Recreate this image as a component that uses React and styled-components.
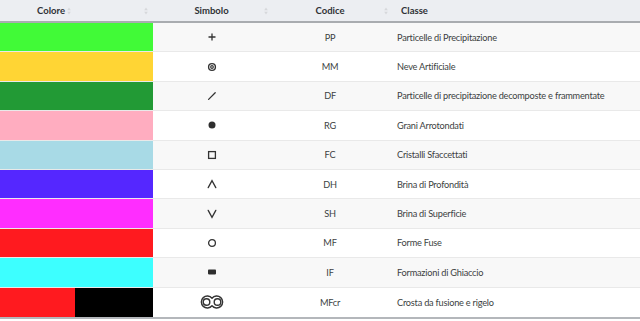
import React from "react";
import styled, { createGlobalStyle } from "styled-components";

const Global = createGlobalStyle`
  html, body { margin: 0; padding: 0; background: #ffffff; }
  body { font-family: Lato, "Liberation Sans", sans-serif; }
`;

const COLS = "75px 78px 117px 120px 1fr";

const Table = styled.div`
  width: 640px;
  display: flex;
  flex-direction: column;
  border-bottom: 2px solid #b4b7bb;
`;

const HeaderRow = styled.div`
  display: grid;
  grid-template-columns: ${COLS};
  height: 23px;
  box-sizing: border-box;
  background: #eceef2;
  border-bottom: 2px solid #a9acb0;
`;

const HeaderCell = styled.div`
  position: relative;
  display: flex;
  align-items: center;
  justify-content: ${(p) => (p.$left ? "flex-start" : "center")};
  padding-left: ${(p) => p.$pl || 0}px;
  font-size: 9.5px;
  font-weight: 700;
  color: #2f3236;
`;

const SortIcon = styled.svg`
  position: absolute;
  right: ${(p) => p.$right ?? 3}px;
  top: 50%;
  margin-top: -4px;
  width: 4px;
  height: 8px;
`;

const Row = styled.div`
  display: grid;
  grid-template-columns: ${COLS};
  height: 29.4px;
  box-sizing: border-box;
  border-bottom: ${(p) => (p.$last ? "none" : "1px solid #e9e9e9")};
  background: ${(p) => (p.$striped ? "#f8f8f8" : "#ffffff")};
`;

const Swatch = styled.div`
  grid-column: ${(p) => (p.$span ? "span 2" : "auto")};
  background: ${(p) => p.$color};
`;

const Cell = styled.div`
  display: flex;
  align-items: center;
  justify-content: ${(p) => (p.$left ? "flex-start" : "center")};
  padding-left: ${(p) => p.$pl || 0}px;
  font-size: 9.2px;
  letter-spacing: -0.22px;
  color: #3c3f42;
  white-space: nowrap;
`;

const Sort = ({ right }) => (
  <SortIcon $right={right} viewBox="0 0 4 8">
    <path d="M2 0.5 L3.8 3.2 L0.2 3.2 Z" fill="#d6d8db" />
    <path d="M2 7.5 L3.8 4.8 L0.2 4.8 Z" fill="#d6d8db" />
  </SortIcon>
);

const S = { stroke: "#333", strokeWidth: 1.3, fill: "none", strokeLinecap: "round", strokeLinejoin: "round" };

const symbols = {
  PP: (
    <svg width="10" height="10" viewBox="0 0 10 10">
      <path d="M5 1.5 V8.5 M1.5 5 H8.5" {...S} strokeLinecap="butt" />
    </svg>
  ),
  MM: (
    <svg width="10" height="10" viewBox="0 0 10 10">
      <circle cx="5" cy="5" r="3.4" {...S} strokeWidth="1.4" />
      <circle cx="5" cy="5" r="1.3" {...S} strokeWidth="1.2" />
    </svg>
  ),
  DF: (
    <svg width="10" height="10" viewBox="0 0 10 10">
      <path d="M1.6 8.4 L8.2 1.8" {...S} />
    </svg>
  ),
  RG: (
    <svg width="10" height="10" viewBox="0 0 10 10">
      <circle cx="5" cy="5" r="3.5" fill="#2e2e2e" />
    </svg>
  ),
  FC: (
    <svg width="10" height="10" viewBox="0 0 10 10">
      <rect x="1.6" y="1.6" width="6.8" height="6.8" {...S} strokeLinejoin="miter" />
    </svg>
  ),
  DH: (
    <svg width="10" height="10" viewBox="0 0 10 10">
      <path d="M1.2 8.6 L5 1.6 L8.8 8.6" {...S} strokeLinejoin="miter" />
    </svg>
  ),
  SH: (
    <svg width="10" height="10" viewBox="0 0 10 10">
      <path d="M1.2 1.4 L5 8.4 L8.8 1.4" {...S} strokeLinejoin="miter" />
    </svg>
  ),
  MF: (
    <svg width="10" height="10" viewBox="0 0 10 10">
      <circle cx="5" cy="5" r="3.4" {...S} />
    </svg>
  ),
  IF: (
    <svg width="10" height="10" viewBox="0 0 10 10">
      <rect x="1" y="2.6" width="8" height="4.8" rx="0.8" fill="#2e2e2e" />
    </svg>
  ),
  MFcr: (
    <svg width="26" height="14" viewBox="0 0 26 14">
      <path
        d="M13 3.2 A6 6 0 1 0 13 10.8 A6 6 0 1 0 13 3.2 Z"
        {...S}
        strokeWidth="1.4"
      />
      <circle cx="7.5" cy="7" r="3.3" {...S} strokeWidth="1.4" />
      <circle cx="18.5" cy="7" r="3.3" {...S} strokeWidth="1.4" />
    </svg>
  ),
};

const rows = [
  { code: "PP", colors: ["#41fa37"], name: "Particelle di Precipitazione" },
  { code: "MM", colors: ["#ffd534"], name: "Neve Artificiale" },
  { code: "DF", colors: ["#229a35"], name: "Particelle di precipitazione decomposte e frammentate" },
  { code: "RG", colors: ["#ffadc0"], name: "Grani Arrotondati" },
  { code: "FC", colors: ["#a8dae6"], name: "Cristalli Sfaccettati" },
  { code: "DH", colors: ["#5527ff"], name: "Brina di Profondità" },
  { code: "SH", colors: ["#ff2dff"], name: "Brina di Superficie" },
  { code: "MF", colors: ["#ff1a1f"], name: "Forme Fuse" },
  { code: "IF", colors: ["#3dffff"], name: "Formazioni di Ghiaccio" },
  { code: "MFcr", colors: ["#ff1a1f", "#000000"], name: "Crosta da fusione e rigelo" },
];

export default function App() {
  return (
    <>
      <Global />
      <Table>
        <HeaderRow>
          <HeaderCell $pl={27}>
            Colore
            <Sort right={4} />
          </HeaderCell>
          <HeaderCell>
            <Sort right={5} />
          </HeaderCell>
          <HeaderCell>
            Simbolo
            <Sort right={2} />
          </HeaderCell>
          <HeaderCell>
            Codice
            <Sort right={2} />
          </HeaderCell>
          <HeaderCell $left $pl={11}>
            Classe
          </HeaderCell>
        </HeaderRow>
        {rows.map((r, i) => (
          <Row key={r.code} $striped={i % 2 === 0} $last={i === rows.length - 1}>
            {r.colors.length === 1 ? (
              <Swatch $span $color={r.colors[0]} />
            ) : (
              r.colors.map((c) => <Swatch key={c} $color={c} />)
            )}
            <Cell>{symbols[r.code]}</Cell>
            <Cell>{r.code}</Cell>
            <Cell $left $pl={7}>
              {r.name}
            </Cell>
          </Row>
        ))}
      </Table>
    </>
  );
}
